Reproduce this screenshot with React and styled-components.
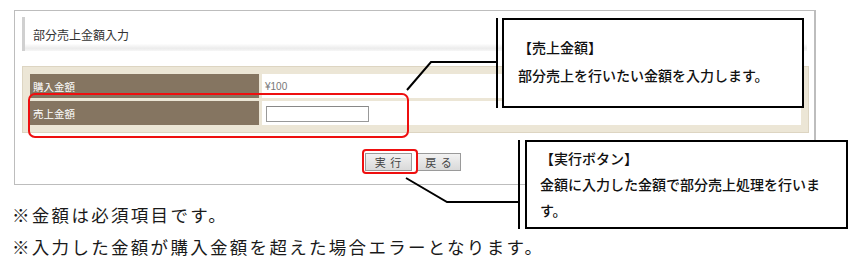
import React from 'react'
import styled, { createGlobalStyle } from 'styled-components'

const GlobalStyle = createGlobalStyle`
  html, body {
    margin: 0;
    padding: 0;
    background: #fff;
  }
  body {
    font-family: "Noto Sans CJK JP", sans-serif;
  }
`

const Page = styled.div`
  position: relative;
  box-sizing: border-box;
  width: 854px;
  height: 271px;
  overflow: hidden;
  padding: 10px 0 0 14px;
`

const Panel = styled.div`
  box-sizing: border-box;
  width: 802px;
  height: 175px;
  border: 1px solid #bdbdbd;
  border-right-width: 2px;
  padding: 6px 7px 0 7px;
  display: flex;
  flex-direction: column;
`

const Header = styled.div`
  box-sizing: border-box;
  height: 34px;
  display: flex;
  align-items: center;
  padding-left: 8px;
  border-left: 3px solid #d0d0d0;
  background: linear-gradient(to bottom, #fff 0%, #fff 78%, #ececec 92%, #f6f6f6 100%);
  font-size: 12px;
  color: #333;
`

const FormBox = styled.div`
  box-sizing: border-box;
  margin-top: 15px;
  width: 787px;
  height: 67px;
  background: #ece6d6;
  border: 1px solid #ddd5c2;
  padding: 7px 7px 0 7px;
  display: grid;
  grid-template-columns: 229px 1fr;
  grid-auto-rows: 24px;
  gap: 3px;
`

const Label = styled.div`
  background: #857561;
  color: #fff;
  font-size: 10.5px;
  display: flex;
  align-items: center;
  padding-left: 3px;
`

const Value = styled.div`
  background: #fff;
  display: flex;
  align-items: center;
  padding-left: 3px;
  font-family: "Liberation Sans", sans-serif;
  font-size: 10px;
  color: #777;
`

const Input = styled.input`
  box-sizing: border-box;
  width: 103px;
  height: 16px;
  margin: 2px 0 0 1px;
  border: 1px solid #999;
  border-top-color: #888;
  background: #fff;
  padding: 0;
`

const ButtonRow = styled.div`
  margin-top: 20px;
  display: flex;
  justify-content: center;
  gap: 5px;
  padding-right: 3px;
`

const Button = styled.button`
  box-sizing: border-box;
  width: ${p => p.$w}px;
  height: 18px;
  padding: 0;
  border: 1px solid #9a9a9a;
  background: linear-gradient(to bottom, #f2f2f2, #d9d9d9);
  font-family: "Noto Sans CJK JP", sans-serif;
  font-size: 11px;
  line-height: 16px;
  color: #444;
  letter-spacing: 1px;
  white-space: pre;
`

const Notes = styled.div`
  margin: 15px 0 0 -2px;
  font-family: "Liberation Serif", "Noto Sans CJK JP", serif;
  font-size: 17.5px;
  line-height: 32px;
  letter-spacing: 2.3px;
  color: #1a1a1a;
`

const Highlight = styled.div`
  position: absolute;
  box-sizing: border-box;
  left: ${p => p.$x}px;
  top: ${p => p.$y}px;
  width: ${p => p.$w}px;
  height: ${p => p.$h}px;
  border: 2.5px solid #ee0f0f;
  border-radius: ${p => p.$r}px;
  pointer-events: none;
`

const Callout = styled.div`
  position: absolute;
  left: ${p => p.$x}px;
  top: ${p => p.$y}px;
  height: ${p => p.$h}px;
  display: flex;
  gap: ${p => p.$gap}px;
`

const Bar = styled.div`
  width: 2px;
  background: #000;
`

const Note = styled.div`
  box-sizing: border-box;
  width: ${p => p.$w}px;
  height: 100%;
  border: 2px solid #000;
  background: #fff;
  padding: ${p => p.$pt}px 0 0 ${p => p.$pl}px;
  font-size: 14px;
  font-weight: 500;
  line-height: ${p => p.$lh}px;
  color: #111;
  white-space: nowrap;
`

const Connectors = styled.svg`
  position: absolute;
  left: 0;
  top: 0;
  pointer-events: none;
`

export default function App() {
  return (
    <Page>
      <GlobalStyle />
      <Panel>
        <Header>部分売上金額入力</Header>
        <FormBox>
          <Label>購入金額</Label>
          <Value>¥100</Value>
          <Label>売上金額</Label>
          <Value>
            <Input type="text" />
          </Value>
        </FormBox>
        <ButtonRow>
          <Button $w={47}>実 行</Button>
          <Button $w={44}>戻 る</Button>
        </ButtonRow>
      </Panel>
      <Notes>
        ※金額は必須項目です。
        <br />
        ※入力した金額が購入金額を超えた場合エラーとなります。
      </Notes>

      <Highlight $x={28} $y={93} $w={381} $h={45} $r={7} />
      <Highlight $x={362} $y={149} $w={56} $h={25} $r={4} />

      <Connectors width="854" height="271">
        <polyline points="496,62 431,62 407,90" fill="none" stroke="#000" strokeWidth="2" />
        <polyline points="518,202 447,202 406,178" fill="none" stroke="#000" strokeWidth="2" />
      </Connectors>

      <Callout $x={496} $y={18} $h={90} $gap={4}>
        <Bar />
        <Note $w={302} $pt={13} $pl={14} $lh={28}>
          【売上金額】
          <br />
          部分売上を行いたい金額を入力します。
        </Note>
      </Callout>

      <Callout $x={518} $y={140} $h={89} $gap={5}>
        <Bar />
        <Note $w={323} $pt={3} $pl={13} $lh={26}>
          【実行ボタン】
          <br />
          金額に入力した金額で部分売上処理を行いま
          <br />
          す。
        </Note>
      </Callout>
    </Page>
  )
}
